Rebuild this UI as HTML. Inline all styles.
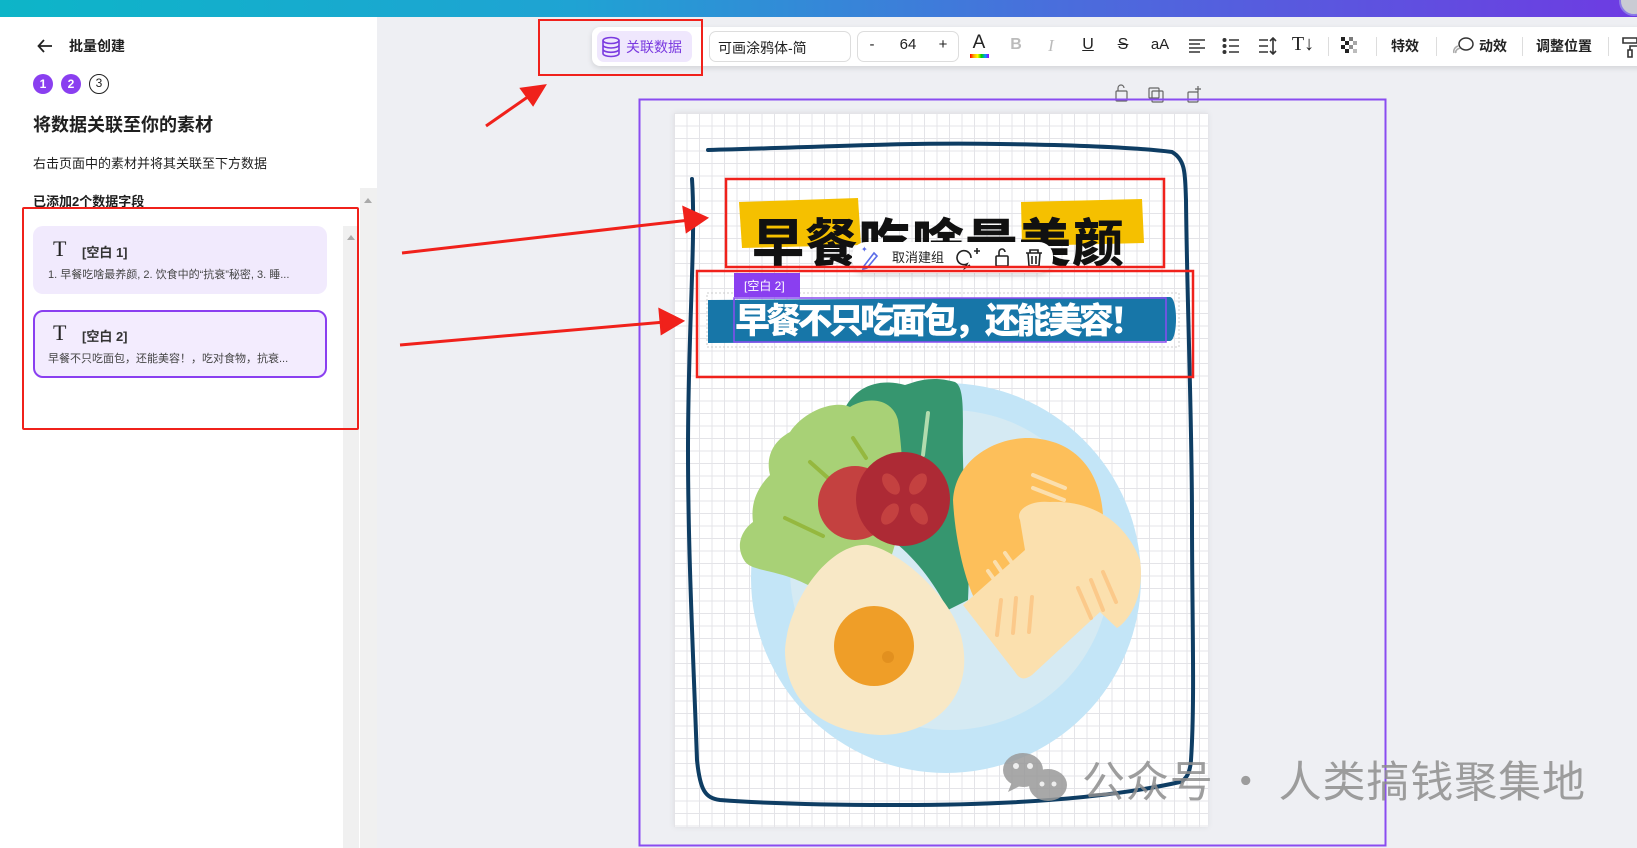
<!DOCTYPE html>
<html><head><meta charset="utf-8"><style>
*{margin:0;padding:0;box-sizing:border-box}
body{width:1637px;height:848px;overflow:hidden;background:#eeeff3;font-family:"Liberation Sans","Noto Sans CJK SC",sans-serif;position:relative;color:#1f1f1f}
.abs{position:absolute}
.top{left:0;top:0;width:1637px;height:17px;background:linear-gradient(90deg,#0db5c8 0%,#1fa3d3 35%,#4a6ddc 65%,#6e3be2 100%)}
.left{left:0;top:17px;width:377px;height:831px;background:#fff}
.card{position:absolute;left:33px;width:294px;height:68px;border-radius:10px;background:#f1eafd}
.card .T{position:absolute;left:20px;top:10px;font-family:"Liberation Serif",serif;font-size:22px;color:#222}
.card .lb{position:absolute;left:49px;top:16px;font-size:13px;font-weight:bold;color:#333}
.card .ds{position:absolute;left:15px;top:40px;font-size:11px;color:#444;white-space:nowrap}
.tb{left:592px;top:27px;width:1060px;height:39px;background:#fff;border-radius:8px;box-shadow:0 2px 6px rgba(0,0,0,.12)}
.ti{position:absolute;top:36px;font-size:15px;color:#222;transform:translateX(-50%);white-space:nowrap}
.sep{position:absolute;top:37px;width:1px;height:19px;background:#ddd}
</style></head><body>
<div class="abs top"></div>
<div class="abs" style="right:-12px;top:-14px;width:30px;height:30px;border-radius:50%;background:#c9cbd3;border:2px solid #8b7be6"></div>
<div class="abs left">
  <svg class="abs" style="left:36px;top:20px" width="18" height="18" viewBox="0 0 18 18"><path d="M16 9H3M8 3L2.5 9 8 15" fill="none" stroke="#222" stroke-width="1.8"/></svg>
  <div class="abs" style="left:69px;top:19px;font-size:14px;font-weight:bold">批量创建</div>
  <div class="abs" style="left:33px;top:57px;width:20px;height:20px;border-radius:50%;background:#8a3ff0;color:#fff;font-size:12px;font-weight:bold;text-align:center;line-height:20px">1</div>
  <div class="abs" style="left:61px;top:57px;width:20px;height:20px;border-radius:50%;background:#8a3ff0;color:#fff;font-size:12px;font-weight:bold;text-align:center;line-height:20px">2</div>
  <div class="abs" style="left:89px;top:57px;width:20px;height:20px;border-radius:50%;border:1.5px solid #222;font-size:12px;text-align:center;line-height:17px">3</div>
  <div class="abs" style="left:33px;top:94px;font-size:18px;font-weight:bold">将数据关联至你的素材</div>
  <div class="abs" style="left:33px;top:136px;font-size:13px">右击页面中的素材并将其关联至下方数据</div>
  <div class="abs" style="left:33px;top:174px;font-size:13px;font-weight:bold">已添加2个数据字段</div>
  <div class="abs" style="left:360px;top:171px;width:17px;height:660px;background:#f0f0f0"></div>
  <div class="abs" style="left:364px;top:177px;border:4px solid transparent;border-bottom:5px solid #aaa;width:0;height:0"></div>
  <div class="abs" style="left:343px;top:209px;width:16px;height:622px;background:#f0f0f0"></div>
  <div class="abs" style="left:347px;top:214px;border:4px solid transparent;border-bottom:5px solid #aaa;width:0;height:0"></div>
  <div class="card" style="top:209px"><span class="T">T</span><span class="lb">[空白 1]</span><span class="ds">1. 早餐吃啥最养颜, 2. 饮食中的“抗衰”秘密, 3. 睡...</span></div>
  <div class="card" style="top:293px;border:2px solid #8a3ff0;background:#f3ecfe"><span class="T" style="left:18px;top:8px">T</span><span class="lb" style="left:47px;top:14px">[空白 2]</span><span class="ds" style="left:13px;top:38px">早餐不只吃面包，还能美容！，吃对食物，抗衰...</span></div>
  <div class="abs" style="left:22px;top:190px;width:337px;height:223px;border:2.5px solid #f0211b;border-radius:2px"></div>
</div>

<!-- toolbar -->
<div class="abs tb"></div>
<div class="abs" style="left:597px;top:31px;width:95px;height:31px;background:#efe7fd;border-radius:7px"></div>
<svg class="abs" style="left:601px;top:36px" width="20" height="22" viewBox="0 0 20 22"><g fill="none" stroke="#7a3ae0" stroke-width="1.6"><ellipse cx="10" cy="4.5" rx="8" ry="3"/><path d="M2 4.5v13c0 1.7 3.6 3 8 3s8-1.3 8-3v-13M2 9c0 1.7 3.6 3 8 3s8-1.3 8-3M2 13.3c0 1.7 3.6 3 8 3s8-1.3 8-3"/></g></svg>
<div class="abs" style="left:626px;top:37px;font-size:14px;color:#7a3ae0">关联数据</div>
<div class="abs" style="left:709px;top:31px;width:142px;height:31px;border:1px solid #ddd;border-radius:7px;font-size:14px;padding:6px 0 0 8px">可画涂鸦体-简</div>
<div class="abs" style="left:857px;top:31px;width:102px;height:31px;border:1px solid #ddd;border-radius:7px"></div>
<div class="ti" style="left:872px">-</div><div class="ti" style="left:908px">64</div><div class="ti" style="left:943px">+</div>
<div class="ti" style="left:979px;top:32px;font-size:19px">A</div>
<div class="abs" style="left:970px;top:54px;width:19px;height:4px;background:linear-gradient(90deg,#f00,#fa0,#ff0,#0c0,#09f,#90f)"></div>
<div class="ti" style="left:1016px;font-weight:bold;color:#bbb;font-size:16px">B</div>
<div class="ti" style="left:1051px;font-style:italic;color:#bbb;font-family:'Liberation Serif',serif;font-size:17px">I</div>
<div class="ti" style="left:1088px;text-decoration:underline;font-size:16px">U</div>
<div class="ti" style="left:1123px;text-decoration:line-through;font-size:16px">S</div>
<div class="ti" style="left:1160px">aA</div>
<svg class="abs" style="left:1188px;top:38px" width="18" height="16"><path d="M1 2h16M1 6h11M1 10h16M1 14h11" stroke="#333" stroke-width="1.6"/></svg>
<svg class="abs" style="left:1222px;top:38px" width="18" height="16"><g fill="#333"><circle cx="2.5" cy="2" r="2"/><circle cx="2.5" cy="8" r="2"/><circle cx="2.5" cy="14" r="2"/></g><path d="M7 2h10M7 8h10M7 14h10" stroke="#333" stroke-width="1.6"/></svg>
<svg class="abs" style="left:1258px;top:37px" width="20" height="18"><path d="M1 3h9M1 9h9M1 15h9M15 1v16M12 4l3-3 3 3M12 14l3 3 3-3" stroke="#333" stroke-width="1.6" fill="none"/></svg>
<div class="ti" style="left:1303px;top:33px;font-family:'Liberation Serif',serif;font-size:20px">T↓</div>
<div class="sep" style="left:1328px"></div>
<svg class="abs" style="left:1341px;top:37px" width="18" height="18"><g fill="#222"><rect x="0" y="0" width="4" height="4"/><rect x="8" y="0" width="4" height="4" opacity=".6"/><rect x="4" y="4" width="4" height="4"/><rect x="12" y="4" width="4" height="4" opacity=".4"/><rect x="0" y="8" width="4" height="4"/><rect x="8" y="8" width="4" height="4" opacity=".5"/><rect x="4" y="12" width="4" height="4"/><rect x="12" y="12" width="4" height="4" opacity=".3"/></g></svg>
<div class="sep" style="left:1376px"></div>
<div class="ti" style="left:1405px;font-size:14px;font-weight:bold">特效</div>
<div class="sep" style="left:1436px"></div>
<svg class="abs" style="left:1452px;top:36px" width="24" height="20"><g fill="none" stroke="#333" stroke-width="1.5"><ellipse cx="14" cy="8" rx="7" ry="6"/><path d="M8 12c-3 1-5 3-4 5M6 10c-3 1-5 4-4 7" stroke="#aaa"/></g></svg>
<div class="ti" style="left:1493px;font-size:14px;font-weight:bold">动效</div>
<div class="sep" style="left:1522px"></div>
<div class="ti" style="left:1564px;font-size:14px;font-weight:bold">调整位置</div>
<div class="sep" style="left:1608px"></div>
<svg class="abs" style="left:1621px;top:36px" width="18" height="22"><path d="M2 2h14v5H2zM16 4h2v6H9v4M7 14h4v7H7z" fill="none" stroke="#333" stroke-width="1.6"/></svg>
<div class="abs" style="left:538px;top:19px;width:165px;height:57px;border:2.5px solid #f0211b"></div>

<!-- page -->
<div class="abs" style="left:674px;top:113px;width:534px;height:714px;background-color:#fff;background-image:linear-gradient(#e4e4e8 1px,transparent 1px),linear-gradient(90deg,#e4e4e8 1px,transparent 1px);background-size:12.5px 12.5px;box-shadow:0 0 6px rgba(0,0,0,.08)"></div>

<svg class="abs" style="left:0;top:0" width="1637" height="848" viewBox="0 0 1637 848">
 <!-- icons above frame -->
 <g fill="none" stroke="#666" stroke-width="1.2">
  <rect x="1116" y="91" width="11" height="10" rx="1"/><path d="M1118 91v-3a3 3 0 0 1 6 0"/>
  <rect x="1152" y="91" width="11" height="11" rx="1"/><rect x="1149" y="88" width="10" height="10" rx="1"/>
  <rect x="1188" y="92" width="10" height="10" rx="1"/><path d="M1198 86v6M1195 89h6"/>
 </g>
 <rect x="639.5" y="99.5" width="746" height="746" fill="none" stroke="#8a4cf0" stroke-width="2"/>
 <!-- plate -->
 <circle cx="946" cy="578" r="195" fill="#c3e5f7"/>
 <circle cx="950" cy="570" r="160" fill="#d5eaf3"/>
 <!-- dark leaf -->
 <path d="M843 412C855 385 880 378 905 385C915 382 930 375 955 382C966 388 962 420 963 460C964 510 971 540 968 600L948 610C930 575 905 545 870 525Z" fill="#36966f"/>
 <path d="M928 413L923 455" stroke="#b2dcae" stroke-width="4" stroke-linecap="round"/>
 <!-- lettuce -->
 <path d="M790 432C805 410 835 400 850 407C870 395 893 400 898 420C905 470 905 520 890 560L808 585C775 568 750 572 744 560C735 545 742 530 753 522C750 500 760 485 770 475C765 455 775 440 790 432Z" fill="#a8d176"/>
 <g stroke="#95b83f" stroke-width="4" stroke-linecap="round"><path d="M853 438L866 458"/><path d="M810 462L828 478"/><path d="M785 518L823 536"/></g>
 <!-- tomatoes -->
 <circle cx="855" cy="503" r="37" fill="#c44140"/>
 <circle cx="903" cy="499" r="47" fill="#ad2a35"/>
 <g fill="#c44140"><ellipse cx="891" cy="484" rx="7" ry="12" transform="rotate(-35 891 484)"/><ellipse cx="918" cy="484" rx="7" ry="12" transform="rotate(35 918 484)"/><ellipse cx="890" cy="514" rx="7" ry="12" transform="rotate(35 890 514)"/><ellipse cx="919" cy="514" rx="7" ry="12" transform="rotate(-35 919 514)"/></g>
 <!-- orange bread -->
 <path d="M953 500C955 460 995 437 1030 438C1075 440 1100 470 1103 515L1080 540L975 600C965 580 955 540 953 500Z" fill="#fdbf5a"/>
 <g stroke="#fbdfae" stroke-width="4" stroke-linecap="round"><path d="M1033 475L1065 488"/><path d="M1033 488L1064 500"/><path d="M1005 553L1012 563"/><path d="M995 562L1001 571"/><path d="M988 571L993 578"/></g>
 <!-- toast -->
 <path d="M1020 520C1015 510 1030 500 1050 502C1090 500 1125 520 1140 560C1145 595 1130 620 1117 628L1100 612L1032 675C1025 680 1020 680 1015 672L963 605L1025 550Z" fill="#fbe0ae"/>
 <g stroke="#fbc98a" stroke-width="4" stroke-linecap="round"><path d="M1001 600L997 635"/><path d="M1016 598L1013 633"/><path d="M1032 597L1029 632"/><path d="M1078 588L1091 618"/><path d="M1091 580L1103 610"/><path d="M1103 572L1116 602"/></g>
 <!-- egg -->
 <path d="M868 545C900 550 955 600 962 640C975 700 930 735 880 735C820 732 785 700 785 650C788 600 830 542 868 545Z" fill="#f8e8c6"/>
 <circle cx="874" cy="646" r="40" fill="#ef9e28"/>
 <circle cx="888" cy="657" r="6" fill="#e2901f"/>
 <!-- hand-drawn frame -->
 <g fill="none" stroke="#0e3d63" stroke-width="4" stroke-linecap="round">
  <path d="M708 150C800 148 900 142 1000 144C1080 145 1140 148 1172 152C1186 160 1185 175 1186 200C1187 300 1192 420 1192 520C1192 620 1195 700 1191 760C1190 775 1185 780 1180 782C1100 800 1000 805 900 805C820 805 760 803 720 800C705 798 700 790 697 760C693 650 688 550 688 450C688 330 696 240 692 179"/>
 </g>
 <!-- title highlights -->
 <path d="M739 202L858 198L861 245L742 248Z" fill="#f5c000"/>
 <path d="M1021 202L1142 199L1144 243L1022 246Z" fill="#f5c000"/>
 <text x="752" y="262" font-family="Noto Sans CJK SC,sans-serif" font-weight="900" font-size="52" fill="#111" textLength="372">早餐吃啥最美颜</text>
 <!-- popup -->
 <rect x="852" y="242" width="201" height="31" rx="14" fill="#fff" filter="drop-shadow(0 2px 3px rgba(0,0,0,.15))"/>
 <path d="M864 266L874 253l3 3-10 12-4 1z" fill="none" stroke="#5b6de8" stroke-width="1.6"/>
 <text x="861" y="252" font-size="8" fill="#5b6de8">✦</text>
 <text x="892" y="262" font-family="Liberation Sans,Noto Sans CJK SC,sans-serif" font-size="13" fill="#222">取消建组</text>
 <g fill="none" stroke="#222" stroke-width="1.6"><path d="M971 258a7 7 0 1 0-4 6l-2 4 5-3"/><path d="M974 251h6M977 248v6"/><rect x="996" y="256" width="12" height="10" rx="1"/><path d="M999 256v-4a3 3 0 0 1 6 0"/><path d="M1026 253h16M1030 253v-3h8v3M1028 253l1 13h10l1-13M1032 256v8M1036 256v8"/></g>
 <!-- red boxes -->
 <rect x="726" y="179" width="438" height="88" fill="none" stroke="#f0211b" stroke-width="2.5"/>
 <rect x="697" y="271" width="496" height="106" fill="none" stroke="#f0211b" stroke-width="2.5"/>
 <!-- blue band -->
 <rect x="707" y="293" width="472" height="54" fill="none" stroke="#ccc" stroke-dasharray="2 2"/>
 <path d="M708 300L1170 297C1178 298 1178 340 1170 341L708 343Z" fill="#1776a8"/>
 <rect x="734" y="298" width="432" height="44" fill="none" stroke="#8a4cf0" stroke-width="1.5"/>
 <rect x="734" y="273" width="66" height="24" fill="#8a3ff0"/>
 <text x="744" y="290" font-family="Liberation Sans,Noto Sans CJK SC,sans-serif" font-size="12" fill="#fff">[空白 2]</text>
 <text x="735" y="333" font-family="Noto Sans CJK SC,sans-serif" font-weight="900" font-size="35" fill="#fff" textLength="410">早餐不只吃面包，还能美容！</text>
 <!-- arrows -->
 <g stroke="#f0211b" stroke-width="3" fill="#f0211b">
  <path d="M402 253L690 220"/><path d="M706 218L684 208L687 231Z"/>
  <path d="M400 345L665 322"/><path d="M682 321L660 310L662 333Z"/>
  <path d="M486 126L532 94"/><path d="M544 86L522 89L533 104Z"/>
 </g>
 <!-- watermark -->
 <g fill="#9a9a9a" opacity=".85"><ellipse cx="1023" cy="770" rx="20" ry="17"/><ellipse cx="1048" cy="785" rx="19" ry="16"/><path d="M1012 782l-4 10 12-6z"/></g>
 <g fill="#eee"><circle cx="1016" cy="766" r="3"/><circle cx="1030" cy="766" r="3"/><circle cx="1042" cy="784" r="2.5"/><circle cx="1054" cy="784" r="2.5"/></g>
 <text x="1082" y="797" font-family="Noto Sans CJK SC,sans-serif" font-size="43" fill="#8e8e8e" opacity=".85" textLength="503">公众号 · 人类搞钱聚集地</text>
</svg>
</body></html>
